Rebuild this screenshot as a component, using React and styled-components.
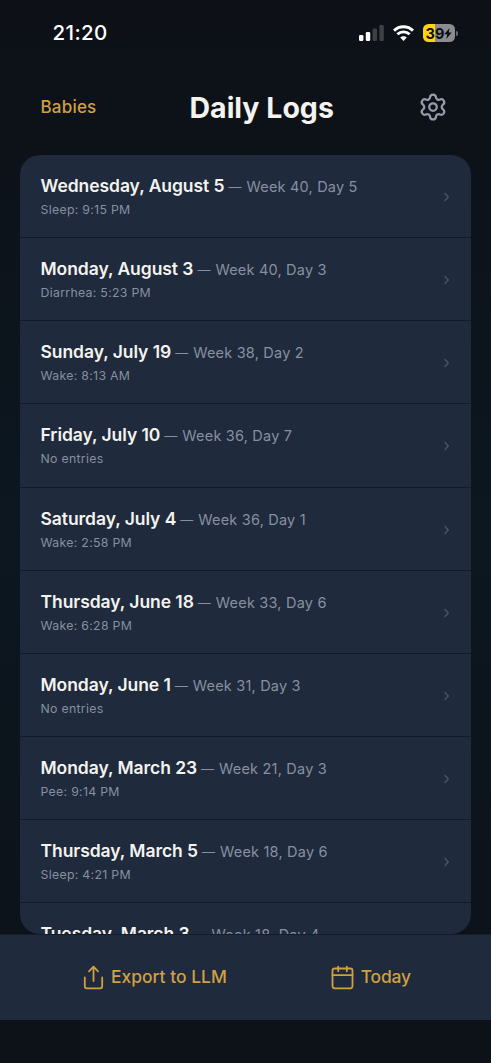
import React from 'react';
import styled, { createGlobalStyle } from 'styled-components';
import { Settings } from 'lucide-react';

const GlobalStyle = createGlobalStyle`
  * {
    box-sizing: border-box;
  }
  body {
    margin: 0;
    background: #0d1117;
    font-family: Inter, 'Liberation Sans', sans-serif;
  }
  button {
    font-family: inherit;
    background: none;
    border: none;
    padding: 0;
    cursor: pointer;
  }
`;

const Screen = styled.div`
  width: 491px;
  height: 1063px;
  display: flex;
  flex-direction: column;
  overflow: hidden;
  background: linear-gradient(180deg, #0d1017 0%, #0d1118 8%, #0c171f 50%, #0d1118 100%);
`;

const StatusBar = styled.div`
  height: 66px;
  flex-shrink: 0;
  display: flex;
  align-items: center;
  justify-content: space-between;
  padding: 0 33px 0 52.5px;
`;

const Clock = styled.span`
  color: #fff;
  font-size: 20.5px;
  font-weight: 550;
  line-height: 24px;
  letter-spacing: 0.4px;
`;

const StatusIcons = styled.div`
  display: flex;
  align-items: center;
  gap: 9px;
`;

const Battery = styled.div`
  display: flex;
  align-items: center;
  gap: 1px;
`;

const BatteryBody = styled.div`
  width: 32px;
  height: 17.5px;
  border-radius: 5.5px;
  display: flex;
  align-items: center;
  justify-content: center;
  color: #0b0d12;
  font-size: 14.5px;
  font-weight: 650;
  line-height: 17px;
  background: linear-gradient(90deg, #ffd50a ${(props) => props.$level}%, #8b8c90 ${(props) => props.$level}%);
`;

const BatteryTip = styled.div`
  width: 2px;
  height: 5px;
  border-radius: 0 2px 2px 0;
  background: #6b6c70;
`;

const Header = styled.header`
  height: 89px;
  flex-shrink: 0;
  display: flex;
  align-items: flex-start;
  padding: 26px 43px 0 40.5px;
`;

const BackButton = styled.button`
  width: 149px;
  flex-shrink: 0;
  text-align: left;
  color: #d0a042;
  font-size: 17px;
  font-weight: 450;
  line-height: 30px;
  letter-spacing: 0.2px;
`;

const Title = styled.h1`
  margin: 0;
  color: #f4f3ee;
  font-size: 28.5px;
  font-weight: 700;
  line-height: 32px;
  letter-spacing: 0;
`;

const GearButton = styled.button`
  margin-left: auto;
  height: 30px;
  display: flex;
  align-items: center;
  color: #979cab;
`;

const LogList = styled.div`
  height: 779px;
  flex-shrink: 0;
  margin: 0 20px;
  border-radius: 20px;
  background: #1f2a3c;
  overflow: hidden;
`;

const LogRow = styled.div`
  height: 83.15px;
  display: flex;
  align-items: center;
  justify-content: space-between;
  padding: 2px 21px 0 20.5px;
  border-bottom: 1.5px solid #121b2a;
`;

const LogText = styled.div`
  display: flex;
  flex-direction: column;
  gap: 3px;
  margin-top: -2px;
`;

const LogTitle = styled.div`
  display: flex;
  align-items: baseline;
  gap: 5px;
  line-height: 23px;
  white-space: nowrap;
`;

const LogDate = styled.span`
  color: #f4f3ee;
  font-size: 17.5px;
  font-weight: 600;
  letter-spacing: -0.06px;
`;

const LogDash = styled.span`
  color: #8790a0;
  font-size: 13px;
  margin-left: -1px;
`;

const LogAge = styled.span`
  color: #8790a0;
  font-size: 14.5px;
  letter-spacing: 0.2px;
`;

const LogEntry = styled.div`
  color: #8790a0;
  font-size: 12.3px;
  line-height: 16px;
  letter-spacing: 0.3px;
`;

const Toolbar = styled.footer`
  height: 86px;
  flex-shrink: 0;
  display: flex;
  align-items: center;
  padding: 0 0 1px 83px;
  gap: 104px;
  background: #1f2a3c;
  border-top: 1px solid #141d2b;
`;

const ToolbarButton = styled.button`
  display: flex;
  align-items: center;
  gap: 7px;
  color: #d0a042;
  font-size: 17.4px;
  font-weight: 500;
  line-height: 24px;
  letter-spacing: ${(props) => (props.$tight ? '-0.2px' : '0.03px')};
`;

const logs = [
  { date: 'Wednesday, August 5', age: 'Week 40, Day 5', entry: 'Sleep: 9:15 PM' },
  { date: 'Monday, August 3', age: 'Week 40, Day 3', entry: 'Diarrhea: 5:23 PM' },
  { date: 'Sunday, July 19', age: 'Week 38, Day 2', entry: 'Wake: 8:13 AM' },
  { date: 'Friday, July 10', age: 'Week 36, Day 7', entry: 'No entries' },
  { date: 'Saturday, July 4', age: 'Week 36, Day 1', entry: 'Wake: 2:58 PM' },
  { date: 'Thursday, June 18', age: 'Week 33, Day 6', entry: 'Wake: 6:28 PM' },
  { date: 'Monday, June 1', age: 'Week 31, Day 3', entry: 'No entries' },
  { date: 'Monday, March 23', age: 'Week 21, Day 3', entry: 'Pee: 9:14 PM' },
  { date: 'Thursday, March 5', age: 'Week 18, Day 6', entry: 'Sleep: 4:21 PM' },
  { date: 'Tuesday, March 3', age: 'Week 18, Day 4', entry: 'No entries' },
];

const SignalIcon = () => (
  <svg width="25" height="16" viewBox="0 0 25 16">
    <rect x="0" y="10" width="4.4" height="6" rx="1.3" fill="#fff" />
    <rect x="6.8" y="7" width="4.4" height="9" rx="1.3" fill="#fff" />
    <rect x="13.6" y="3.5" width="4.4" height="12.5" rx="1.3" fill="#3e4044" />
    <rect x="20.4" y="0" width="4.4" height="16" rx="1.3" fill="#3e4044" />
  </svg>
);

const WifiIcon = () => (
  <svg width="21" height="16" viewBox="0 0 21 16" fill="none" stroke="#fff" strokeWidth="2.9">
    <path d="M1 5.6a13.6 13.6 0 0 1 19 0" />
    <path d="M4.4 9.3a8.8 8.8 0 0 1 12.2 0" />
    <path d="M10.5 15.9 7.2 12.6a4.7 4.7 0 0 1 6.6 0z" fill="#fff" stroke="none" />
  </svg>
);

const BoltIcon = () => (
  <svg width="8" height="11" viewBox="0 0 8 11">
    <path d="M5.6 0 0.3 6.2h3L2.3 11 7.7 4.6h-3z" fill="#0b0d12" />
  </svg>
);

const ChevronIcon = () => (
  <svg width="7" height="10" viewBox="0 0 7 10" fill="none" stroke="#475265" strokeWidth="1.6">
    <path d="M1.6 1 5.2 5 1.6 9" />
  </svg>
);

const ExportIcon = () => (
  <svg
    width="21"
    height="25"
    viewBox="0 0 21 25"
    fill="none"
    stroke="currentColor"
    strokeWidth="1.8"
    strokeLinecap="round"
    strokeLinejoin="round"
  >
    <path d="M1.8 12.5v8.8a2 2 0 0 0 2 2h13.4a2 2 0 0 0 2-2v-8.8" />
    <path d="M10.5 16V2M6 6.3 10.5 1.7 15 6.3" />
  </svg>
);

const CalendarIcon = () => (
  <svg
    width="23"
    height="25"
    viewBox="0 0 23 25"
    fill="none"
    stroke="currentColor"
    strokeWidth="1.8"
    strokeLinecap="round"
    strokeLinejoin="round"
  >
    <rect x="1.5" y="3.5" width="20" height="19.8" rx="2.2" />
    <path d="M1.5 10.2h20M7.2 1.6v4.6M15.8 1.6v4.6" />
  </svg>
);

const App = () => {
  return (
    <>
      <GlobalStyle />
      <Screen>
        <StatusBar>
          <Clock>21:20</Clock>
          <StatusIcons>
            <SignalIcon />
            <WifiIcon />
            <Battery>
              <BatteryBody $level={39}>
                39
                <BoltIcon />
              </BatteryBody>
              <BatteryTip />
            </Battery>
          </StatusIcons>
        </StatusBar>
        <Header>
          <BackButton type="button">Babies</BackButton>
          <Title>Daily Logs</Title>
          <GearButton type="button" aria-label="Settings">
            <Settings size={30} strokeWidth={1.8} />
          </GearButton>
        </Header>
        <LogList>
          {logs.map((log) => (
            <LogRow key={log.date}>
              <LogText>
                <LogTitle>
                  <LogDate>{log.date}</LogDate>
                  <LogDash>—</LogDash>
                  <LogAge>{log.age}</LogAge>
                </LogTitle>
                <LogEntry>{log.entry}</LogEntry>
              </LogText>
              <ChevronIcon />
            </LogRow>
          ))}
        </LogList>
        <Toolbar>
          <ToolbarButton type="button">
            <ExportIcon />
            Export to LLM
          </ToolbarButton>
          <ToolbarButton type="button" $tight>
            <CalendarIcon />
            Today
          </ToolbarButton>
        </Toolbar>
      </Screen>
    </>
  );
};

export default App;
